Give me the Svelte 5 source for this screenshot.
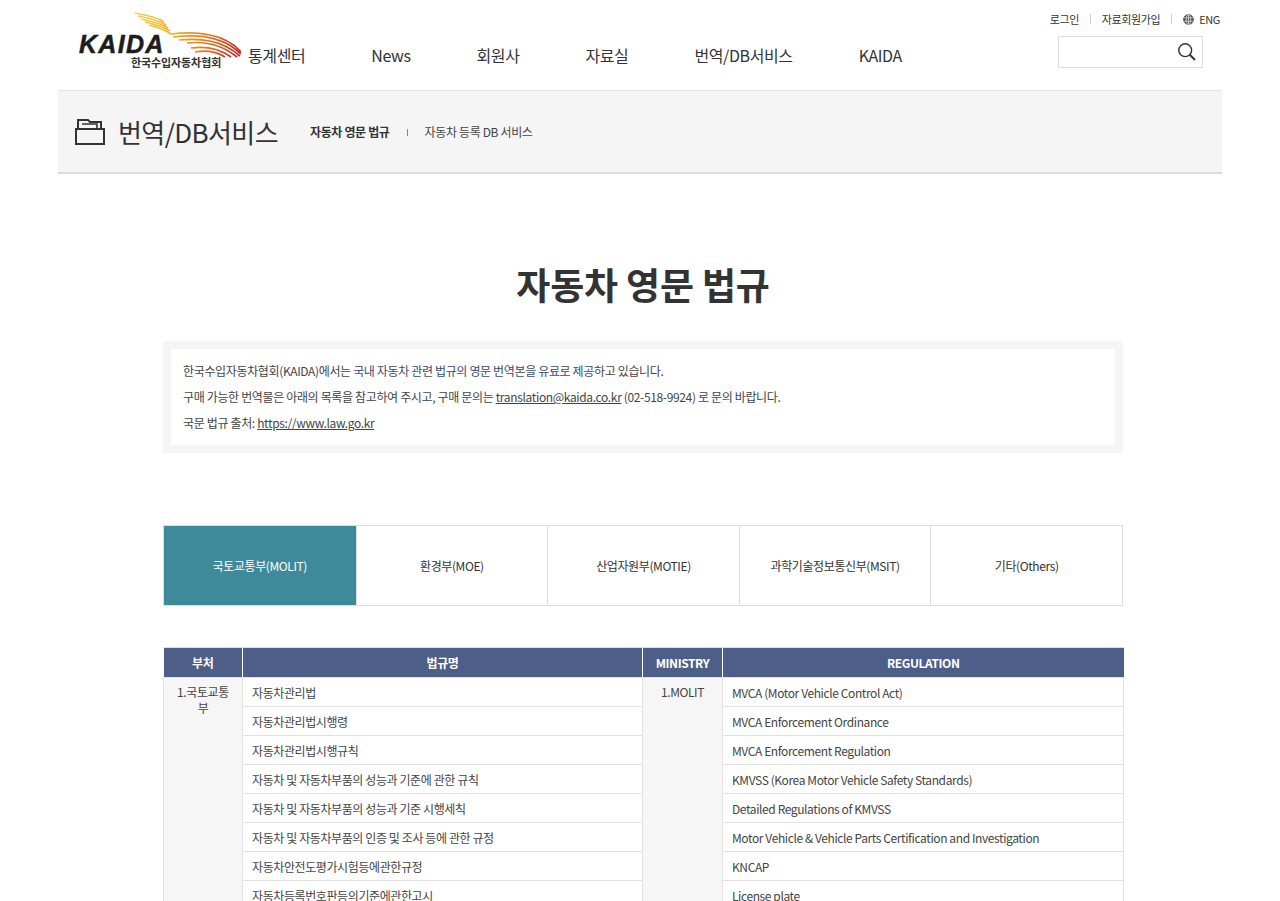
<script>
  const nav = ['통계센터', 'News', '회원사', '자료실', '번역/DB서비스', 'KAIDA'];
  const tabs = [
    ['국토교통부', '(MOLIT)'],
    ['환경부', '(MOE)'],
    ['산업자원부', '(MOTIE)'],
    ['과학기술정보통신부', '(MSIT)'],
    ['기타', '(Others)']
  ];
  const rows = [
    ['자동차관리법', 'MVCA (Motor Vehicle Control Act)'],
    ['자동차관리법시행령', 'MVCA Enforcement Ordinance'],
    ['자동차관리법시행규칙', 'MVCA Enforcement Regulation'],
    ['자동차 및 자동차부품의 성능과 기준에 관한 규칙', 'KMVSS (Korea Motor Vehicle Safety Standards)'],
    ['자동차 및 자동차부품의 성능과 기준 시행세칙', 'Detailed Regulations of KMVSS'],
    ['자동차 및 자동차부품의 인증 및 조사 등에 관한 규정', 'Motor Vehicle & Vehicle Parts Certification and Investigation'],
    ['자동차안전도평가시험등에관한규정', 'KNCAP'],
    ['자동차등록번호판등의기준에관한고시', 'License plate']
  ];
  const stripes = [
    'M40 3 C52 5 62 7 69 12', 'M43 6 C54 8 63 10 71 15', 'M46 9 C56 11 65 13 73 18',
    'M50 12 C59 14 67 16 75 21', 'M54 15 C62 17 69 19 76 24', 'M76 24 C100 21 130 23 146 42',
    'M78 27 C102 24 128 26 146 44', 'M84 30 C106 28 127 30 145 46', 'M92 33 C110 31 126 34 142 47',
    'M96 38 C112 36 125 39 136 47', 'M100 42 C112 40 122 42 130 47'
  ];
</script>

<div class="page">
  <header class="header">
    <a class="logo" href="#top">
      <svg width="146" height="62" viewBox="0 0 146 62" aria-hidden="true">
        <defs>
          <linearGradient id="sw" x1="40" y1="0" x2="146" y2="40" gradientUnits="userSpaceOnUse">
            <stop offset="0" stop-color="#f6d45c" />
            <stop offset=".4" stop-color="#eeb01e" />
            <stop offset=".7" stop-color="#e9761e" />
            <stop offset="1" stop-color="#bf2323" />
          </linearGradient>
        </defs>
        {#each stripes as d}
          <path {d} fill="none" stroke="url(#sw)" stroke-width="1.7" />
        {/each}
      </svg>
      <span class="kaida">KAIDA</span>
      <span class="kname">한국수입자동차협회</span>
    </a>
    <nav class="nav">
      {#each nav as item}<a href="#top">{item}</a>{/each}
    </nav>
    <div class="util">
      <div class="links">
        <a href="#top">로그인</a>
        <i></i>
        <a href="#top">자료회원가입</a>
        <i></i>
        <a class="eng" href="#top">
          <svg width="11" height="11" viewBox="0 0 11 11" fill="none" stroke="#333" stroke-width=".9" aria-hidden="true">
            <circle cx="5.5" cy="5.5" r="4.8" fill="#555" />
            <ellipse cx="5.5" cy="5.5" rx="2.2" ry="4.8" stroke="#fff" stroke-width=".6" />
            <path d="M.8 3.8h9.4M.8 7.2h9.4M5.5.7v9.6" stroke="#fff" stroke-width=".6" />
          </svg>
          ENG
        </a>
      </div>
      <div class="search">
        <svg width="20" height="20" viewBox="0 0 20 20" fill="none" stroke="#333" aria-hidden="true">
          <circle cx="8.2" cy="8.2" r="6.4" stroke-width="1.4" />
          <path d="M12.8 12.8 18 18" stroke-width="2" />
        </svg>
      </div>
    </div>
  </header>

  <section class="sub">
    <svg class="folder" width="32" height="28" viewBox="0 0 32 28" fill="none" stroke="#333" stroke-width="2" aria-hidden="true">
      <path d="M4 11V2h10l2 2h11v7" />
      <path d="M8 6h15v5" stroke-width="1.6" />
      <path d="M2 11h28v15H2z" />
    </svg>
    <h2>번역/DB서비스</h2>
    <a class="subcur" href="#top">자동차 영문 법규</a>
    <i class="subsep"></i>
    <a class="sublink" href="#top">자동차 등록 DB 서비스</a>
  </section>

  <main class="main">
    <h1>자동차 영문 법규</h1>

    <div class="notice">
      <div class="notice-in">
        <p>한국수입자동차협회(KAIDA)에서는 <span class="blue">국내 자동차 관련 법규의 영문 번역본을 유료로 제공</span>하고 있습니다.</p>
        <p>구매 가능한 번역물은 아래의 목록을 참고하여 주시고, 구매 문의는 <u>translation@kaida.co.kr</u> (02-518-9924) 로 문의 바랍니다.</p>
        <p>국문 법규 출처: <u>https://www.law.go.kr</u></p>
      </div>
    </div>

    <div class="tabs">
      {#each tabs as t, i}
        <div class="tab" class:on={i === 0}>{t[0]}<br />{t[1]}</div>
      {/each}
    </div>

    <table>
      <colgroup>
        <col class="c1" /><col class="c2" /><col class="c3" /><col class="c4" />
      </colgroup>
      <thead>
        <tr><th>부처</th><th>법규명</th><th>MINISTRY</th><th>REGULATION</th></tr>
      </thead>
      <tbody>
        {#each rows as r, i}
          <tr>
            {#if i === 0}<td class="dept" rowspan={rows.length}>1.국토교통부</td>{/if}
            <td>{r[0]}</td>
            {#if i === 0}<td class="dept" rowspan={rows.length}>1.MOLIT</td>{/if}
            <td>{r[1]}</td>
          </tr>
        {/each}
      </tbody>
    </table>
  </main>
</div>

<style>
  :global(body) {
    margin: 0;
    background: #fff;
    overflow: hidden;
    font-family: "Noto Sans CJK KR", "Noto Sans", sans-serif;
    color: #333;
  }
  a { color: inherit; text-decoration: none; }
  .page { width: 1280px; }

  .header {
    position: relative;
    height: 90px;
    margin: 0 58px;
    display: flex;
    align-items: flex-start;
  }
  .logo {
    position: relative;
    display: block;
    width: 190px;
    height: 90px;
    flex: none;
  }
  .logo svg { position: absolute; left: 37px; top: 10px; }
  .kaida {
    position: absolute;
    left: 21px;
    top: 29px;
    font: italic 700 25px/30px "Liberation Sans", sans-serif;
    letter-spacing: 1.3px;
    color: #1c1c1c;
    -webkit-text-stroke: .5px #1c1c1c;
  }
  .kname {
    position: absolute;
    left: 73px;
    top: 54px;
    font-size: 11px;
    line-height: 16px;
    font-weight: 700;
    letter-spacing: -.1px;
    color: #333;
    white-space: nowrap;
  }
  .nav {
    display: flex;
    gap: 66px;
    padding-top: 43px;
    font-size: 16px;
    line-height: 24px;
    letter-spacing: -.4px;
    color: #333;
    white-space: nowrap;
  }
  .util {
    position: absolute;
    right: 0;
    top: 0;
    width: 170px;
    height: 90px;
  }
  .links {
    position: absolute;
    right: 2px;
    top: 11px;
    display: flex;
    align-items: center;
    font-size: 11px;
    line-height: 16px;
    letter-spacing: -.4px;
    color: #333;
    white-space: nowrap;
  }
  .links i {
    width: 1px;
    height: 10px;
    background: #ccc;
    margin: 0 11px;
  }
  .eng { display: flex; align-items: center; gap: 5px; }
  .search {
    position: absolute;
    right: 19px;
    top: 36px;
    width: 142px;
    height: 30px;
    border: 1px solid #ddd;
    display: flex;
    justify-content: flex-end;
    align-items: center;
    padding-right: 5px;
    box-sizing: content-box;
    width: 138px;
  }

  .sub {
    margin: 0 58px;
    height: 81px;
    background: #f5f5f5;
    border-top: 1px solid #e6e6e6;
    border-bottom: 2px solid #dcdcdc;
    display: flex;
    align-items: center;
    white-space: nowrap;
  }
  .folder { margin-left: 16px; }
  .sub h2 {
    margin: 0 0 0 12px;
    font-size: 26px;
    line-height: 38px;
    font-weight: 400;
    letter-spacing: -.6px;
    color: #333;
  }
  .subcur {
    margin-left: 32px;
    font-size: 12px;
    font-weight: 700;
    letter-spacing: -.35px;
    color: #333;
  }
  .subsep {
    width: 1px;
    height: 7px;
    background: #888;
    margin: 2px 17px 0;
  }
  .sublink {
    font-size: 12px;
    letter-spacing: -.35px;
    color: #444;
  }

  .main { margin-left: 163px; width: 960px; }
  h1 {
    margin: 0;
    padding-top: 83px;
    height: 84px;
    text-align: center;
    font-size: 37px;
    line-height: 54px;
    font-weight: 700;
    letter-spacing: -.2px;
    color: #333;
  }
  .notice {
    margin-top: 0;
    padding: 8px;
    background: #f5f5f5;
  }
  .notice-in {
    background: #fff;
    padding: 9px 12px 9px;
    height: 78px;
  }
  .notice p {
    margin: 0;
    height: 26px;
    font-size: 12px;
    line-height: 26px;
    letter-spacing: -.35px;
    color: #444;
    white-space: nowrap;
  }
  .blue { color: #3a4a70; }
  .tabs {
    margin-top: 72px;
    display: grid;
    grid-template-columns: repeat(5, 1fr);
    height: 79px;
    border: 1px solid #ddd;
    border-left: 1px solid #ddd;
  }
  .tab {
    display: flex;
    flex-direction: column;
    align-items: center;
    justify-content: center;
    text-align: center;
    font-size: 12px;
    line-height: 17px;
    letter-spacing: -.4px;
    color: #333;
    border-left: 1px solid #ddd;
  }
  .tab br { display: none; }
  .tab:first-child { border-left: 0; }
  .tab.on { background: #3e8a9a; color: #fff; }

  table {
    margin-top: 41px;
    width: 960px;
    border-collapse: collapse;
    table-layout: fixed;
    font-size: 12px;
    letter-spacing: -.4px;
  }
  .c1 { width: 79px; }
  .c2 { width: 400px; }
  .c3 { width: 80px; }
  .c4 { width: 401px; }
  th {
    height: 29px;
    padding: 0;
    background: #4d5f88;
    color: #fff;
    font-weight: 700;
    border-left: 1px solid #fff;
    border-top: 1px solid #ddd;
  }
  th:first-child { border-left: 0; }
  td {
    height: 28px;
    padding: 0 9px;
    border: 1px solid #e2e2e2;
    color: #444;
    white-space: nowrap;
  }
  td.dept {
    vertical-align: top;
    text-align: center;
    white-space: normal;
    background: #f6f6f6;
    padding: 6px 12px;
    line-height: 16px;
  }
</style>
